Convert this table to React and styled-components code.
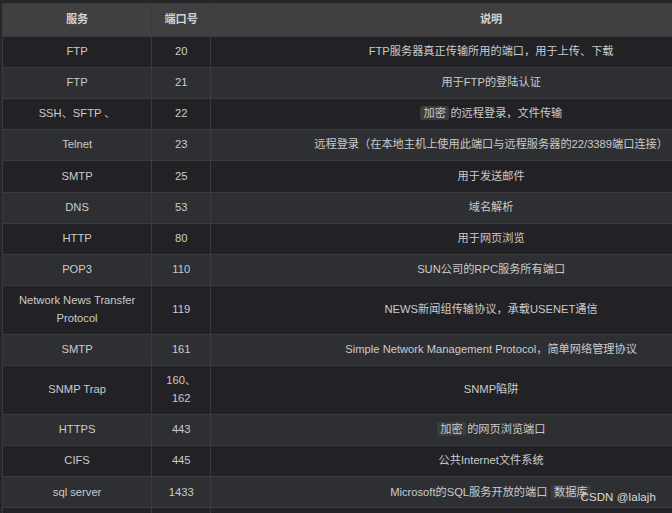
import React from "react";
import styled, { createGlobalStyle } from "styled-components";

const Global = createGlobalStyle`
  html, body {
    margin: 0;
    padding: 0;
    background: #26262b;
    overflow: hidden;
  }
  body {
    font-family: "Liberation Sans", Arial, "Noto Sans CJK SC", sans-serif;
  }
`;

const Page = styled.div`
  position: relative;
  width: 672px;
  height: 513px;
  overflow: hidden;
  padding: 3px 0 0 2px;
  box-sizing: border-box;
`;

const Table = styled.table`
  border-collapse: collapse;
  table-layout: fixed;
  width: 770px;
  font-size: 11.2px;
  line-height: 17.6px;
  color: #cbcbcb;
`;

const HeadCell = styled.th`
  background: #404040;
  border: 1px solid #3a3a3a;
  padding: 7px 6px;
  font-weight: bold;
  color: #d2d2d2;
  text-align: center;
`;

const Row = styled.tr`
  background: ${(p) => (p.$alt ? "#2e2f32" : "#222226")};
`;

const Cell = styled.td`
  border: 1px solid #3b3b3e;
  padding: 6.3px 6px;
  text-align: center;
  word-break: normal;
  overflow-wrap: break-word;
`;

const NarrowCell = styled(Cell)`
  padding: 6.3px 10px;
`;

const Code = styled.code`
  font-family: inherit;
  background: #3b3c3e;
  border-radius: 2px;
  padding: 1px 3.5px;
  margin-right: 1px;
  color: #cbcbcb;
`;

const Watermark = styled.div`
  position: absolute;
  right: 16px;
  bottom: 10px;
  font-family: "Liberation Sans", Arial, sans-serif;
  font-size: 11.5px;
  color: #dcdcdc;
  letter-spacing: 0.1px;
`;

const rows = [
  ["FTP", "20", "FTP服务器真正传输所用的端口，用于上传、下载"],
  ["FTP", "21", "用于FTP的登陆认证"],
  ["SSH、SFTP 、", "22", <><Code>加密</Code>的远程登录，文件传输</>],
  ["Telnet", "23", "远程登录（在本地主机上使用此端口与远程服务器的22/3389端口连接）"],
  ["SMTP", "25", "用于发送邮件"],
  ["DNS", "53", "域名解析"],
  ["HTTP", "80", "用于网页浏览"],
  ["POP3", "110", "SUN公司的RPC服务所有端口"],
  ["Network News Transfer Protocol", "119", "NEWS新闻组传输协议，承载USENET通信"],
  ["SMTP", "161", "Simple Network Management Protocol，简单网络管理协议"],
  ["SNMP Trap", "160、162", "SNMP陷阱"],
  ["HTTPS", "443", <><Code>加密</Code>的网页浏览端口</>],
  ["CIFS", "445", "公共Internet文件系统"],
  ["sql server", "1433", <>Microsoft的SQL服务开放的端口 <Code>数据库</Code></>],
  ["", "", ""],
];

export default function App() {
  return (
    <>
      <Global />
      <Page>
        <Table>
          <colgroup>
            <col style={{ width: 149 }} />
            <col style={{ width: 59 }} />
            <col style={{ width: 560 }} />
          </colgroup>
          <thead>
            <tr>
              <HeadCell>服务</HeadCell>
              <HeadCell>端口号</HeadCell>
              <HeadCell>说明</HeadCell>
            </tr>
          </thead>
          <tbody>
            {rows.map((r, i) => (
              <Row key={i} $alt={i % 2 === 1}>
                <Cell>{r[0] || "\u00a0"}</Cell>
                <NarrowCell>{r[1] || "\u00a0"}</NarrowCell>
                <Cell>{r[2] || "\u00a0"}</Cell>
              </Row>
            ))}
          </tbody>
        </Table>
        <Watermark>CSDN @lalajh</Watermark>
      </Page>
    </>
  );
}
